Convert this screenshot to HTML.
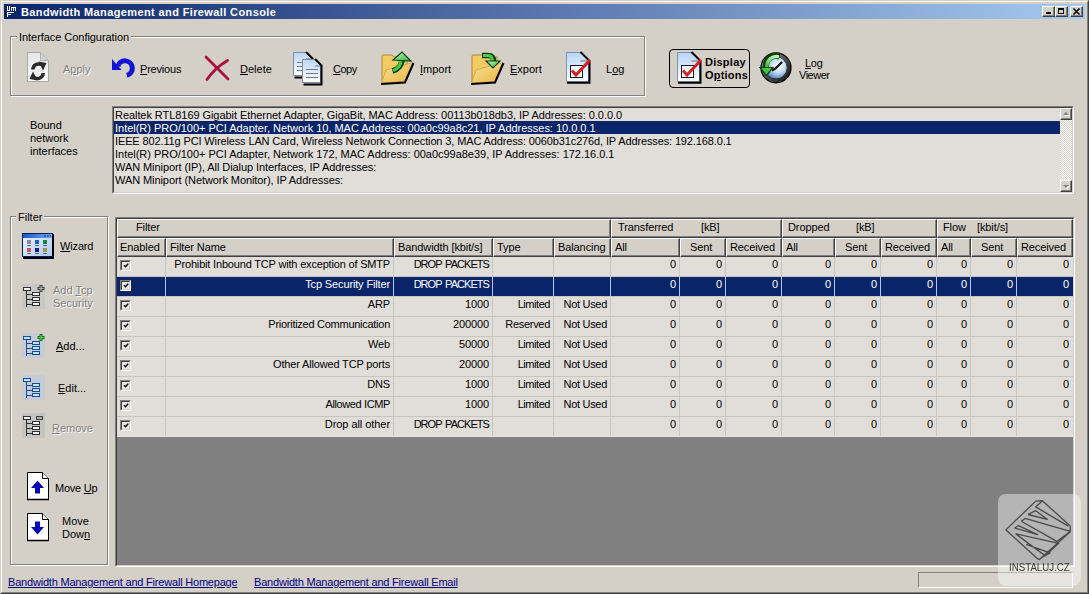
<!DOCTYPE html><html><head><meta charset="utf-8"><style>
*{margin:0;padding:0;box-sizing:border-box}
html,body{width:1089px;height:594px;overflow:hidden;background:#D4D0C8;font-family:"Liberation Sans",sans-serif;font-size:11px;color:#000}
.ab{position:absolute}
svg{position:absolute;overflow:visible}
.t{position:absolute;line-height:13px;white-space:nowrap;font-size:11px}
.u{text-decoration:underline}
.dis{color:#808080;text-shadow:1px 1px 0 #fff}
.gb{position:absolute;border:1px solid #808080;box-shadow:inset 1px 1px 0 #fff,1px 1px 0 #fff}
.gt{position:absolute;background:#D4D0C8;padding:0 2px;line-height:13px;white-space:nowrap}
.tb{position:absolute;width:13px;height:11px;background:#D4D0C8;border-top:1px solid #fff;border-left:1px solid #fff;border-right:1px solid #404040;border-bottom:1px solid #404040;box-shadow:inset -1px -1px 0 #808080}
</style></head><body>
<div class="ab" style="left:0;top:0;width:1089px;height:594px;border-top:1px solid #D4D0C8;border-left:1px solid #D4D0C8;border-right:1px solid #404040;border-bottom:1px solid #404040"></div>
<div class="ab" style="left:1px;top:1px;width:1087px;height:592px;border-top:1px solid #fff;border-left:1px solid #fff;border-right:1px solid #808080;border-bottom:1px solid #808080"></div>
<div class="ab" style="left:4px;top:4px;width:1081px;height:15px;background:linear-gradient(to right,#0A246A,#A6CAF0);"></div>
<svg style="left:0;top:0" width="20" height="20" shape-rendering="crispEdges"><g fill="#fff"><rect x="7" y="6" width="1" height="5"/><rect x="9" y="6" width="1" height="5"/><rect x="7" y="10" width="3" height="1"/><rect x="11" y="7" width="1" height="4"/><rect x="11" y="7" width="5" height="1"/><rect x="13" y="7" width="1" height="4"/><rect x="15" y="7" width="1" height="4"/><rect x="7" y="12" width="1" height="5"/><rect x="7" y="12" width="7" height="1"/><rect x="7" y="14" width="4" height="1"/></g></svg>
<div class="t " style="left:21px;top:6px;color:#fff;font-weight:bold;letter-spacing:0.38px">Bandwidth Management and Firewall Console</div>
<div class="tb" style="left:1042px;top:6px"></div>
<div class="tb" style="left:1055px;top:6px"></div>
<div class="tb" style="left:1070px;top:6px"></div>
<div class="ab" style="left:1046px;top:12px;width:5px;height:2px;background:#000;"></div>
<div class="ab" style="left:1058px;top:8px;width:6px;height:6px;border:1px solid #000;border-top-width:2px"></div>
<svg style="left:1073px;top:8px" width="7" height="7" viewBox="0 0 7 7"><path d="M0.5 0.5L6.5 6.5M6.5 0.5L0.5 6.5" stroke="#000" stroke-width="1.6"/></svg>
<div class="gb" style="left:10px;top:36px;width:635px;height:60px"></div>
<div class="gt" style="left:17px;top:31px;letter-spacing:-0.05px">Interface Configuration</div>
<svg style="left:27px;top:52px" width="22" height="30" viewBox="0 0 22 30"><defs><linearGradient id="gA" x1="0" y1="0" x2="0" y2="1"><stop offset="0" stop-color="#E6E6E6"/><stop offset="1" stop-color="#FAFAFA"/></linearGradient></defs><path d="M0.5 0.5H13.5L21.5 8.5V29.5H0.5Z" fill="url(#gA)" stroke="#A8A8A8"/><path d="M13.5 0.5V8.5H21.5" fill="#D0D0D0" stroke="#B0B0B0"/><path d="M5.8 17.5C6 13 10 11 14.5 12.5" stroke="#2A2A2A" stroke-width="3.4" fill="none"/><path d="M11.5 9.5L19.5 11L16 18.5Z" fill="#2A2A2A"/><path d="M16.2 21C16 25.5 12 27.5 7.5 26" stroke="#2A2A2A" stroke-width="3.4" fill="none"/><path d="M10.5 28.5L2.5 27L6 19.5Z" fill="#2A2A2A"/></svg>
<svg style="left:106px;top:52px" width="30" height="28" viewBox="0 0 30 28"><path d="M6 7L6 18L15.5 18Z" fill="#1414D4"/><path d="M11.8 14.3A7.4 7.4 0 1 1 20.8 23.4" stroke="#1414D4" stroke-width="5" fill="none"/></svg>
<svg style="left:198px;top:50px" width="36" height="34" viewBox="0 0 36 34"><path d="M8 7C14 13 22 21 30 29" stroke="#A8123C" stroke-width="2.8" fill="none" stroke-linecap="round"/><path d="M29.5 10.5C22 15 14 22 9 29.5" stroke="#A8123C" stroke-width="2.8" fill="none" stroke-linecap="round"/></svg>
<svg style="left:288px;top:48px" width="38" height="40" viewBox="0 0 38 40"><defs><linearGradient id="gC" x1="0" y1="0" x2="0" y2="1"><stop offset="0" stop-color="#BCD6F8"/><stop offset="1" stop-color="#FFFFFF"/></linearGradient></defs><path d="M5.5 4.5H18L23.5 10.5V27.5H5.5Z" fill="url(#gC)" stroke="#7A8AA8" stroke-width="1"/><path d="M18 4L24.5 10.5V29.5H6.5" stroke="#000" stroke-width="2" fill="none"/><path d="M9 14.5H21" stroke="#6A7A98" stroke-width="1"/><path d="M9 18.5H21" stroke="#6A7A98" stroke-width="1"/><path d="M9 22.5H21" stroke="#6A7A98" stroke-width="1"/><path d="M18 11H23" stroke="#8898B0" stroke-width="1.5"/><path d="M14.5 11.5H27L32.5 17.5V34.5H14.5Z" fill="url(#gC)" stroke="#7A8AA8" stroke-width="1"/><path d="M27 11L33.5 17.5V36.5H15.5" stroke="#000" stroke-width="2" fill="none"/><path d="M18 21.5H30" stroke="#6A7A98" stroke-width="1"/><path d="M18 25.5H30" stroke="#6A7A98" stroke-width="1"/><path d="M18 29.5H30" stroke="#6A7A98" stroke-width="1"/><path d="M27 18H32" stroke="#8898B0" stroke-width="1.5"/></svg>
<svg style="left:376px;top:48px" width="40" height="40" viewBox="0 0 40 40"><defs><linearGradient id="gF" x1="0" y1="0" x2="1" y2="1"><stop offset="0" stop-color="#FBE39A"/><stop offset="1" stop-color="#E8B440"/></linearGradient><linearGradient id="gG" x1="0" y1="0" x2="1" y2="1"><stop offset="0" stop-color="#C8F8C8"/><stop offset="1" stop-color="#30B030"/></linearGradient></defs><path d="M6 8Q6 7 7 7H16L18 9H31V16L6 35Z" fill="#F2CC62" stroke="#A07820" stroke-width="0.8"/><path d="M5.5 35L10 22L36.5 14.5L28.5 33.5Z" fill="url(#gF)" stroke="#C09030" stroke-width="0.6"/><path d="M5 36L29 34.5L37.5 15" stroke="#000" stroke-width="2" fill="none"/><path d="M16.5 23C22 21.5 26 17 26 11" stroke="#084008" stroke-width="5.5" fill="none"/><path d="M17 22.5C22 21 25 17 25 11" stroke="#48C848" stroke-width="3.2" fill="none"/><path d="M17 12L26 4L35 13Z" fill="url(#gG)" stroke="#084008" stroke-width="1.2"/></svg>
<svg style="left:466px;top:48px" width="40" height="40" viewBox="0 0 40 40"><defs><linearGradient id="gF" x1="0" y1="0" x2="1" y2="1"><stop offset="0" stop-color="#FBE39A"/><stop offset="1" stop-color="#E8B440"/></linearGradient><linearGradient id="gG" x1="0" y1="0" x2="1" y2="1"><stop offset="0" stop-color="#C8F8C8"/><stop offset="1" stop-color="#30B030"/></linearGradient></defs><path d="M6 8Q6 7 7 7H16L18 9H31V16L6 35Z" fill="#F2CC62" stroke="#A07820" stroke-width="0.8"/><path d="M5.5 35L10 22L36.5 14.5L28.5 33.5Z" fill="url(#gF)" stroke="#C09030" stroke-width="0.6"/><path d="M5 36L29 34.5L37.5 15" stroke="#000" stroke-width="2" fill="none"/><path d="M16 7.5H22C26 7.5 27.5 9.5 27.5 13.5" stroke="#084008" stroke-width="5.5" fill="none"/><path d="M17 7.5H22C25 7.5 26.5 9.5 26.5 13.5" stroke="#50C850" stroke-width="2.8" fill="none"/><path d="M20 13H34L27 20Z" fill="url(#gG)" stroke="#084008" stroke-width="1.2"/></svg>
<svg style="left:566px;top:52px" width="28" height="36" viewBox="0 0 28 36"><defs><linearGradient id="gL1" x1="0" y1="0" x2="0" y2="1"><stop offset="0" stop-color="#B8D4F8"/><stop offset="1" stop-color="#FFFFFF"/></linearGradient></defs><path d="M0.5 0.5H14.5L22.5 8.5V29.5H0.5Z" fill="url(#gL1)" stroke="#8090B0"/><path d="M14.5 0L23.5 9V30.8H1" stroke="#000" stroke-width="2" fill="none"/><path d="M14.5 9H22" stroke="#8898A8" stroke-width="1.5"/><rect x="4.5" y="13.5" width="12" height="12" fill="#fff" stroke="#101840" stroke-width="1"/><path d="M6 18.5L10 23L24 8" stroke="#D42020" stroke-width="3" fill="none"/></svg>
<div class="t " style="left:606px;top:63px;">L<span class="u">o</span>g</div>
<div class="ab" style="left:669px;top:49px;width:81px;height:39px;border:1px solid #000;border-radius:4px"></div>
<svg style="left:677px;top:52px" width="28" height="36" viewBox="0 0 28 36"><defs><linearGradient id="gL2" x1="0" y1="0" x2="0" y2="1"><stop offset="0" stop-color="#B8D4F8"/><stop offset="1" stop-color="#FFFFFF"/></linearGradient></defs><path d="M0.5 0.5H14.5L22.5 8.5V29.5H0.5Z" fill="url(#gL2)" stroke="#8090B0"/><path d="M14.5 0L23.5 9V30.8H1" stroke="#000" stroke-width="2" fill="none"/><path d="M14.5 9H22" stroke="#8898A8" stroke-width="1.5"/><rect x="4.5" y="13.5" width="12" height="12" fill="#fff" stroke="#101840" stroke-width="1"/><path d="M6 18.5L10 23L24 8" stroke="#D42020" stroke-width="3" fill="none"/></svg>
<svg style="left:760px;top:52px" width="33" height="33" viewBox="0 0 33 33"><defs><radialGradient id="gK" cx="0.6" cy="0.4" r="0.6"><stop offset="0" stop-color="#FFFFFF"/><stop offset="0.5" stop-color="#C8E0F4"/><stop offset="1" stop-color="#5A8AC0"/></radialGradient><linearGradient id="gR" x1="0" y1="0" x2="1" y2="1"><stop offset="0" stop-color="#A0A0A0"/><stop offset="0.5" stop-color="#505050"/><stop offset="1" stop-color="#101010"/></linearGradient><linearGradient id="gA2" x1="0" y1="0" x2="0" y2="1"><stop offset="0" stop-color="#B8F0B0"/><stop offset="1" stop-color="#30B830"/></linearGradient></defs><circle cx="16" cy="15.8" r="15" fill="url(#gR)" stroke="#000" stroke-width="1.2"/><circle cx="16" cy="15.8" r="11.2" fill="url(#gK)" stroke="#303030" stroke-width="1"/><path d="M15.5 16.5L22 10M15.5 16.5L12 18.5" stroke="#101010" stroke-width="2.2"/><path d="M19.5 4.5C12 2.5 5.5 7 5.8 15.5" stroke="#0A400A" stroke-width="6" fill="none"/><path d="M19 4.8C12.5 3.5 6.8 7.5 6.8 15.5" stroke="url(#gA2)" stroke-width="3.4" fill="none"/><path d="M0 15.5H13L6.5 23.5Z" fill="#40C840" stroke="#0A400A" stroke-width="1.2"/></svg>
<div class="t dis" style="left:63px;top:63px;">A<span class="u">p</span>ply</div>
<div class="t " style="left:140px;top:63px;letter-spacing:-0.2px"><span class="u">P</span>revious</div>
<div class="t " style="left:240px;top:63px;"><span class="u">D</span>elete</div>
<div class="t " style="left:333px;top:63px;letter-spacing:-0.5px"><span class="u">C</span>opy</div>
<div class="t " style="left:420px;top:63px;"><span class="u">I</span>mport</div>
<div class="t " style="left:510px;top:63px;"><span class="u">E</span>xport</div>
<div class="t " style="left:705px;top:56px;font-weight:bold;letter-spacing:0.25px">Display</div>
<div class="t " style="left:705px;top:69px;font-weight:bold;letter-spacing:0.2px">O<span class="u">p</span>tions</div>
<div class="t " style="left:805px;top:57px;letter-spacing:-0.3px"><span class="u">L</span>og</div>
<div class="t " style="left:799px;top:69px;letter-spacing:-0.5px">Viewer</div>
<div class="t " style="left:30px;top:119px;">Bound</div>
<div class="t " style="left:30px;top:132px;">network</div>
<div class="t " style="left:30px;top:145px;">interfaces</div>
<div class="ab" style="left:112px;top:106px;width:962px;height:88px;border-top:1px solid #808080;border-left:1px solid #808080;border-right:1px solid #fff;border-bottom:1px solid #fff"></div>
<div class="ab" style="left:113px;top:107px;width:960px;height:86px;border-top:1px solid #404040;border-left:1px solid #404040;border-right:1px solid #D4D0C8;border-bottom:1px solid #D4D0C8;background:#E1DEDA;"></div>
<div class="t " style="left:115px;top:109px;color:#000;letter-spacing:-0.061px">Realtek RTL8169 Gigabit Ethernet Adapter, GigaBit, MAC Address: 00113b018db3, IP Addresses: 0.0.0.0</div>
<div class="ab" style="left:114px;top:121px;width:946px;height:13px;background:#0A246A;"></div>
<div class="t " style="left:115px;top:122px;color:#fff;letter-spacing:-0.022px">Intel(R) PRO/100+ PCI Adapter, Network 10, MAC Address: 00a0c99a8c21, IP Addresses: 10.0.0.1</div>
<div class="t " style="left:115px;top:135px;color:#000;letter-spacing:-0.128px">IEEE 802.11g PCI Wireless LAN Card, Wireless Network Connection 3, MAC Address: 0060b31c276d, IP Addresses: 192.168.0.1</div>
<div class="t " style="left:115px;top:148px;color:#000;letter-spacing:-0.022px">Intel(R) PRO/100+ PCI Adapter, Network 172, MAC Address: 00a0c99a8e39, IP Addresses: 172.16.0.1</div>
<div class="t " style="left:115px;top:161px;color:#000;letter-spacing:-0.075px">WAN Miniport (IP), All Dialup Interfaces, IP Addresses:</div>
<div class="t " style="left:115px;top:174px;color:#000;letter-spacing:-0.08px">WAN Miniport (Network Monitor), IP Addresses:</div>
<div class="ab" style="left:1060px;top:108px;width:12px;height:84px;background:repeating-conic-gradient(#fff 0 25%,#D4D0C8 0 50%) 0 0/2px 2px"></div>
<div class="tb" style="left:1060px;top:108px;width:12px;height:12px"></div>
<div class="tb" style="left:1060px;top:180px;width:12px;height:12px"></div>
<svg style="left:1063px;top:112px" width="8" height="5" viewBox="0 0 8 5"><path d="M4 1L7 4H1Z" fill="#fff"/><path d="M3 0L6 3H0Z" fill="#808080"/></svg>
<svg style="left:1063px;top:185px" width="8" height="5" viewBox="0 0 8 5"><path d="M1 1H7L4 4Z" fill="#fff"/><path d="M0 0H6L3 3Z" fill="#808080"/></svg>
<div class="gb" style="left:10px;top:216px;width:98px;height:349px"></div>
<div class="gt" style="left:16px;top:211px">Filter</div>
<svg style="left:22px;top:233px" width="32" height="26" viewBox="0 0 32 26"><defs><linearGradient id="gW" x1="0" y1="0" x2="1" y2="0"><stop offset="0" stop-color="#1A5AC8"/><stop offset="1" stop-color="#70A8F0"/></linearGradient><linearGradient id="gW2" x1="0" y1="0" x2="1" y2="1"><stop offset="0" stop-color="#F0F6FF"/><stop offset="1" stop-color="#A8C8F0"/></linearGradient></defs><rect x="0.5" y="0.5" width="30" height="23" fill="url(#gW2)" stroke="#0A1A50"/><rect x="1" y="1" width="29" height="4" fill="url(#gW)"/><path d="M22 3H29" stroke="#3060B0" stroke-width="2" stroke-dasharray="2 1"/><path d="M31 1V25H1" stroke="#000010" stroke-width="2" fill="none"/><rect x="5" y="7" width="4" height="4" fill="#8A88A8"/><rect x="13" y="7" width="4" height="4" fill="#2060C0"/><rect x="21" y="7" width="4" height="4" fill="#208040"/><rect x="5" y="15" width="4" height="4" fill="#C05858"/><rect x="13" y="15" width="4" height="4" fill="#102080"/><rect x="21" y="15" width="4" height="4" fill="#A89050"/><path d="M5 12.5h4M13 12.5h4M21 12.5h4M5 20.5h4M13 20.5h4M21 20.5h4" stroke="#606080" stroke-width="1"/></svg>
<svg style="left:22px;top:284px" width="24" height="26" viewBox="0 0 24 26"><rect x="0" y="0" width="23" height="25" fill="#C8C8C6"/><path d="M4.5 6V23M4.5 10.5H10M4.5 15.5H10M4.5 20.5H10" stroke="#303030" stroke-width="1"/><rect x="1.5" y="3.5" width="7" height="3" fill="#F4F4F4" stroke="#303030"/><rect x="10.5" y="8.5" width="7" height="3" fill="#F4F4F4" stroke="#303030"/><rect x="10.5" y="13.5" width="7" height="3" fill="#F4F4F4" stroke="#303030"/><rect x="10.5" y="18.5" width="7" height="3" fill="#F4F4F4" stroke="#303030"/><path d="M19 1V8M15.5 4.5H22.5" stroke="#404040" stroke-width="3"/><path d="M19 2V7M16.5 4.5H21.5" stroke="#B0B0B0" stroke-width="1.2"/></svg>
<svg style="left:22px;top:333px" width="24" height="26" viewBox="0 0 24 26"><rect x="0" y="0" width="23" height="25" fill="#C6CCD6"/><path d="M4.5 6V23M4.5 10.5H10M4.5 15.5H10M4.5 20.5H10" stroke="#1A4A90" stroke-width="1"/><rect x="1.5" y="3.5" width="7" height="3" fill="#B8E4FF" stroke="#1A4A90"/><rect x="10.5" y="8.5" width="7" height="3" fill="#B8E4FF" stroke="#1A4A90"/><rect x="10.5" y="13.5" width="7" height="3" fill="#B8E4FF" stroke="#1A4A90"/><rect x="10.5" y="18.5" width="7" height="3" fill="#B8E4FF" stroke="#1A4A90"/><path d="M19 1V8M15.5 4.5H22.5" stroke="#207020" stroke-width="3"/><path d="M19 2V7M16.5 4.5H21.5" stroke="#60D040" stroke-width="1.2"/></svg>
<svg style="left:22px;top:375px" width="24" height="26" viewBox="0 0 24 26"><rect x="0" y="0" width="23" height="25" fill="#C6CCD6"/><path d="M4.5 6V23M4.5 10.5H10M4.5 15.5H10M4.5 20.5H10" stroke="#1A4A90" stroke-width="1"/><rect x="1.5" y="3.5" width="7" height="3" fill="#B8E4FF" stroke="#1A4A90"/><rect x="10.5" y="8.5" width="7" height="3" fill="#B8E4FF" stroke="#1A4A90"/><rect x="10.5" y="13.5" width="7" height="3" fill="#B8E4FF" stroke="#1A4A90"/><rect x="10.5" y="18.5" width="7" height="3" fill="#B8E4FF" stroke="#1A4A90"/></svg>
<svg style="left:22px;top:413px" width="24" height="26" viewBox="0 0 24 26"><rect x="0" y="0" width="23" height="25" fill="#C4C4C2"/><path d="M4.5 6V23M4.5 10.5H10M4.5 15.5H10M4.5 20.5H10" stroke="#303030" stroke-width="1"/><rect x="1.5" y="3.5" width="7" height="3" fill="#F4F4F4" stroke="#303030"/><rect x="10.5" y="8.5" width="7" height="3" fill="#F4F4F4" stroke="#303030"/><rect x="10.5" y="13.5" width="7" height="3" fill="#F4F4F4" stroke="#303030"/><rect x="10.5" y="18.5" width="7" height="3" fill="#F4F4F4" stroke="#303030"/><rect x="14.5" y="3.5" width="6" height="3" fill="#B0B0B0" stroke="#404040"/></svg>
<svg style="left:27px;top:472px" width="22" height="28" viewBox="0 0 22 28"><path d="M0.5 0.5H15.5L21.5 6.5V27.5H0.5Z" fill="#FFFFFF" stroke="#000"/><path d="M15.5 0.5V6.5H21.5" fill="#F4F4F4" stroke="#000"/><path d="M0 27.5H22" stroke="#000" stroke-width="1.5"/><path d="M10.5 8.5L4 16H8V21.5H13V16H17Z" fill="#0606B4"/></svg>
<svg style="left:27px;top:513px" width="22" height="28" viewBox="0 0 22 28"><path d="M0.5 0.5H15.5L21.5 6.5V27.5H0.5Z" fill="#FFFFFF" stroke="#000"/><path d="M15.5 0.5V6.5H21.5" fill="#F4F4F4" stroke="#000"/><path d="M0 27.5H22" stroke="#000" stroke-width="1.5"/><path d="M8 8.5H13V14H17L10.5 21.5L4 14H8Z" fill="#0606B4"/></svg>
<div class="t " style="left:60px;top:240px;letter-spacing:-0.15px"><span class="u">W</span>izard</div>
<div class="t dis" style="left:53px;top:284px;">Add <span class="u">T</span>cp</div>
<div class="t dis" style="left:53px;top:297px;">Security</div>
<div class="t " style="left:56px;top:340px;"><span class="u">A</span>dd...</div>
<div class="t " style="left:58px;top:382px;"><span class="u">E</span>dit...</div>
<div class="t dis" style="left:52px;top:422px;"><span class="u">R</span>emove</div>
<div class="t " style="left:55px;top:482px;letter-spacing:-0.25px">Move <span class="u">U</span>p</div>
<div class="t " style="left:62px;top:515px;">Move</div>
<div class="t " style="left:62px;top:528px;">Dow<span class="u">n</span></div>
<div class="ab" style="left:115px;top:217px;width:960px;height:350px;border-top:1px solid #808080;border-left:1px solid #808080;border-right:1px solid #fff;border-bottom:1px solid #fff"></div>
<div class="ab" style="left:116px;top:218px;width:958px;height:348px;border-top:1px solid #404040;border-left:1px solid #404040;border-right:1px solid #D4D0C8;border-bottom:1px solid #D4D0C8;background:#808080;"></div>
<div class="ab" style="left:117px;top:219px;width:494px;height:19px;background:#D4D0C8;border-top:1px solid #fff;border-left:1px solid #fff;border-right:1px solid #404040;border-bottom:1px solid #404040;box-shadow:inset -1px -1px 0 #808080"></div>
<div class="t " style="left:136px;top:221px;letter-spacing:-0.1px">Filter</div>
<div class="ab" style="left:611px;top:219px;width:171px;height:19px;background:#D4D0C8;border-top:1px solid #fff;border-left:1px solid #fff;border-right:1px solid #404040;border-bottom:1px solid #404040;box-shadow:inset -1px -1px 0 #808080"></div>
<div class="t " style="left:618px;top:221px;letter-spacing:-0.1px">Transferred</div>
<div class="t " style="left:701px;top:221px;letter-spacing:-0.1px">[kB]</div>
<div class="ab" style="left:782px;top:219px;width:155px;height:19px;background:#D4D0C8;border-top:1px solid #fff;border-left:1px solid #fff;border-right:1px solid #404040;border-bottom:1px solid #404040;box-shadow:inset -1px -1px 0 #808080"></div>
<div class="t " style="left:788px;top:221px;letter-spacing:-0.1px">Dropped</div>
<div class="t " style="left:856px;top:221px;letter-spacing:-0.1px">[kB]</div>
<div class="ab" style="left:937px;top:219px;width:136px;height:19px;background:#D4D0C8;border-top:1px solid #fff;border-left:1px solid #fff;border-right:1px solid #404040;border-bottom:1px solid #404040;box-shadow:inset -1px -1px 0 #808080"></div>
<div class="t " style="left:943px;top:221px;letter-spacing:-0.1px">Flow</div>
<div class="t " style="left:977px;top:221px;letter-spacing:-0.1px">[kbit/s]</div>
<div class="ab" style="left:117px;top:238px;width:49px;height:19px;background:#D4D0C8;border-top:1px solid #fff;border-left:1px solid #fff;border-right:1px solid #404040;border-bottom:1px solid #404040;box-shadow:inset -1px -1px 0 #808080"></div>
<div class="t " style="left:120px;top:241px;letter-spacing:-0.1px">Enabled</div>
<div class="ab" style="left:166px;top:238px;width:228px;height:19px;background:#D4D0C8;border-top:1px solid #fff;border-left:1px solid #fff;border-right:1px solid #404040;border-bottom:1px solid #404040;box-shadow:inset -1px -1px 0 #808080"></div>
<div class="t " style="left:170px;top:241px;letter-spacing:-0.1px">Filter Name</div>
<div class="ab" style="left:394px;top:238px;width:99px;height:19px;background:#D4D0C8;border-top:1px solid #fff;border-left:1px solid #fff;border-right:1px solid #404040;border-bottom:1px solid #404040;box-shadow:inset -1px -1px 0 #808080"></div>
<div class="t " style="left:398px;top:241px;letter-spacing:-0.1px">Bandwidth [kbit/s]</div>
<div class="ab" style="left:493px;top:238px;width:61px;height:19px;background:#D4D0C8;border-top:1px solid #fff;border-left:1px solid #fff;border-right:1px solid #404040;border-bottom:1px solid #404040;box-shadow:inset -1px -1px 0 #808080"></div>
<div class="t " style="left:497px;top:241px;letter-spacing:-0.1px">Type</div>
<div class="ab" style="left:554px;top:238px;width:57px;height:19px;background:#D4D0C8;border-top:1px solid #fff;border-left:1px solid #fff;border-right:1px solid #404040;border-bottom:1px solid #404040;box-shadow:inset -1px -1px 0 #808080"></div>
<div class="t " style="left:558px;top:241px;letter-spacing:-0.1px">Balancing</div>
<div class="ab" style="left:611px;top:238px;width:69px;height:19px;background:#D4D0C8;border-top:1px solid #fff;border-left:1px solid #fff;border-right:1px solid #404040;border-bottom:1px solid #404040;box-shadow:inset -1px -1px 0 #808080"></div>
<div class="t " style="left:615px;top:241px;letter-spacing:-0.1px">All</div>
<div class="ab" style="left:680px;top:238px;width:46px;height:19px;background:#D4D0C8;border-top:1px solid #fff;border-left:1px solid #fff;border-right:1px solid #404040;border-bottom:1px solid #404040;box-shadow:inset -1px -1px 0 #808080"></div>
<div class="t " style="left:690px;top:241px;letter-spacing:-0.1px">Sent</div>
<div class="ab" style="left:726px;top:238px;width:56px;height:19px;background:#D4D0C8;border-top:1px solid #fff;border-left:1px solid #fff;border-right:1px solid #404040;border-bottom:1px solid #404040;box-shadow:inset -1px -1px 0 #808080"></div>
<div class="t " style="left:730px;top:241px;letter-spacing:-0.1px">Received</div>
<div class="ab" style="left:782px;top:238px;width:53px;height:19px;background:#D4D0C8;border-top:1px solid #fff;border-left:1px solid #fff;border-right:1px solid #404040;border-bottom:1px solid #404040;box-shadow:inset -1px -1px 0 #808080"></div>
<div class="t " style="left:786px;top:241px;letter-spacing:-0.1px">All</div>
<div class="ab" style="left:835px;top:238px;width:46px;height:19px;background:#D4D0C8;border-top:1px solid #fff;border-left:1px solid #fff;border-right:1px solid #404040;border-bottom:1px solid #404040;box-shadow:inset -1px -1px 0 #808080"></div>
<div class="t " style="left:845px;top:241px;letter-spacing:-0.1px">Sent</div>
<div class="ab" style="left:881px;top:238px;width:56px;height:19px;background:#D4D0C8;border-top:1px solid #fff;border-left:1px solid #fff;border-right:1px solid #404040;border-bottom:1px solid #404040;box-shadow:inset -1px -1px 0 #808080"></div>
<div class="t " style="left:885px;top:241px;letter-spacing:-0.1px">Received</div>
<div class="ab" style="left:937px;top:238px;width:34px;height:19px;background:#D4D0C8;border-top:1px solid #fff;border-left:1px solid #fff;border-right:1px solid #404040;border-bottom:1px solid #404040;box-shadow:inset -1px -1px 0 #808080"></div>
<div class="t " style="left:941px;top:241px;letter-spacing:-0.1px">All</div>
<div class="ab" style="left:971px;top:238px;width:46px;height:19px;background:#D4D0C8;border-top:1px solid #fff;border-left:1px solid #fff;border-right:1px solid #404040;border-bottom:1px solid #404040;box-shadow:inset -1px -1px 0 #808080"></div>
<div class="t " style="left:981px;top:241px;letter-spacing:-0.1px">Sent</div>
<div class="ab" style="left:1017px;top:238px;width:56px;height:19px;background:#D4D0C8;border-top:1px solid #fff;border-left:1px solid #fff;border-right:1px solid #404040;border-bottom:1px solid #404040;box-shadow:inset -1px -1px 0 #808080"></div>
<div class="t " style="left:1021px;top:241px;letter-spacing:-0.1px">Received</div>
<div class="ab" style="left:117px;top:257px;width:956px;height:19px;background:#E1DEDA;"></div>
<div class="ab" style="left:117px;top:276px;width:956px;height:1px;background:#C8C5C0;"></div>
<div class="ab" style="left:165px;top:257px;width:1px;height:19px;background:#C8C5C0;"></div>
<div class="ab" style="left:393px;top:257px;width:1px;height:19px;background:#C8C5C0;"></div>
<div class="ab" style="left:492px;top:257px;width:1px;height:19px;background:#C8C5C0;"></div>
<div class="ab" style="left:553px;top:257px;width:1px;height:19px;background:#C8C5C0;"></div>
<div class="ab" style="left:610px;top:257px;width:1px;height:19px;background:#C8C5C0;"></div>
<div class="ab" style="left:679px;top:257px;width:1px;height:19px;background:#C8C5C0;"></div>
<div class="ab" style="left:725px;top:257px;width:1px;height:19px;background:#C8C5C0;"></div>
<div class="ab" style="left:781px;top:257px;width:1px;height:19px;background:#C8C5C0;"></div>
<div class="ab" style="left:834px;top:257px;width:1px;height:19px;background:#C8C5C0;"></div>
<div class="ab" style="left:880px;top:257px;width:1px;height:19px;background:#C8C5C0;"></div>
<div class="ab" style="left:936px;top:257px;width:1px;height:19px;background:#C8C5C0;"></div>
<div class="ab" style="left:970px;top:257px;width:1px;height:19px;background:#C8C5C0;"></div>
<div class="ab" style="left:1016px;top:257px;width:1px;height:19px;background:#C8C5C0;"></div>
<div class="t" style="right:699px;top:258px;color:#000;letter-spacing:-0.18px;">Prohibit Inbound TCP with exception of SMTP</div>
<div class="t" style="right:600px;top:258px;color:#000;letter-spacing:-0.95px;word-spacing:1.6px">DROP PACKETS</div>
<div class="t" style="right:413px;top:258px;color:#000;letter-spacing:-0.12px;">0</div>
<div class="t" style="right:367px;top:258px;color:#000;letter-spacing:-0.12px;">0</div>
<div class="t" style="right:311px;top:258px;color:#000;letter-spacing:-0.12px;">0</div>
<div class="t" style="right:258px;top:258px;color:#000;letter-spacing:-0.12px;">0</div>
<div class="t" style="right:212px;top:258px;color:#000;letter-spacing:-0.12px;">0</div>
<div class="t" style="right:156px;top:258px;color:#000;letter-spacing:-0.12px;">0</div>
<div class="t" style="right:122px;top:258px;color:#000;letter-spacing:-0.12px;">0</div>
<div class="t" style="right:76px;top:258px;color:#000;letter-spacing:-0.12px;">0</div>
<div class="t" style="right:20px;top:258px;color:#000;letter-spacing:-0.12px;">0</div>
<div class="ab" style="left:120px;top:260px;width:11px;height:11px;border-top:1px solid #808080;border-left:1px solid #808080;border-right:1px solid #fff;border-bottom:1px solid #fff"></div>
<div class="ab" style="left:121px;top:261px;width:9px;height:9px;border-top:1px solid #404040;border-left:1px solid #404040;border-right:1px solid #D4D0C8;border-bottom:1px solid #D4D0C8;background:#E8E6E2"></div>
<svg style="left:122px;top:262px" width="7" height="7" viewBox="0 0 7 7"><path d="M2 3.2L3.6 4.8L6.2 1.6" stroke="#000" stroke-width="1.4" fill="none"/></svg>
<div class="ab" style="left:117px;top:277px;width:956px;height:19px;background:#0A246A;"></div>
<div class="ab" style="left:117px;top:296px;width:956px;height:1px;background:#C8C5C0;"></div>
<div class="ab" style="left:165px;top:277px;width:1px;height:19px;background:#A6CAF0;"></div>
<div class="ab" style="left:393px;top:277px;width:1px;height:19px;background:#A6CAF0;"></div>
<div class="ab" style="left:492px;top:277px;width:1px;height:19px;background:#A6CAF0;"></div>
<div class="ab" style="left:553px;top:277px;width:1px;height:19px;background:#A6CAF0;"></div>
<div class="ab" style="left:610px;top:277px;width:1px;height:19px;background:#A6CAF0;"></div>
<div class="ab" style="left:679px;top:277px;width:1px;height:19px;background:#A6CAF0;"></div>
<div class="ab" style="left:725px;top:277px;width:1px;height:19px;background:#A6CAF0;"></div>
<div class="ab" style="left:781px;top:277px;width:1px;height:19px;background:#A6CAF0;"></div>
<div class="ab" style="left:834px;top:277px;width:1px;height:19px;background:#A6CAF0;"></div>
<div class="ab" style="left:880px;top:277px;width:1px;height:19px;background:#A6CAF0;"></div>
<div class="ab" style="left:936px;top:277px;width:1px;height:19px;background:#A6CAF0;"></div>
<div class="ab" style="left:970px;top:277px;width:1px;height:19px;background:#A6CAF0;"></div>
<div class="ab" style="left:1016px;top:277px;width:1px;height:19px;background:#A6CAF0;"></div>
<div class="t" style="right:699px;top:278px;color:#fff;letter-spacing:-0.14px;">Tcp Security Filter</div>
<div class="t" style="right:600px;top:278px;color:#fff;letter-spacing:-0.95px;word-spacing:1.6px">DROP PACKETS</div>
<div class="t" style="right:413px;top:278px;color:#fff;letter-spacing:-0.12px;">0</div>
<div class="t" style="right:367px;top:278px;color:#fff;letter-spacing:-0.12px;">0</div>
<div class="t" style="right:311px;top:278px;color:#fff;letter-spacing:-0.12px;">0</div>
<div class="t" style="right:258px;top:278px;color:#fff;letter-spacing:-0.12px;">0</div>
<div class="t" style="right:212px;top:278px;color:#fff;letter-spacing:-0.12px;">0</div>
<div class="t" style="right:156px;top:278px;color:#fff;letter-spacing:-0.12px;">0</div>
<div class="t" style="right:122px;top:278px;color:#fff;letter-spacing:-0.12px;">0</div>
<div class="t" style="right:76px;top:278px;color:#fff;letter-spacing:-0.12px;">0</div>
<div class="t" style="right:20px;top:278px;color:#fff;letter-spacing:-0.12px;">0</div>
<div class="ab" style="left:120px;top:280px;width:11px;height:11px;border-top:1px solid #808080;border-left:1px solid #808080;border-right:1px solid #fff;border-bottom:1px solid #fff"></div>
<div class="ab" style="left:121px;top:281px;width:9px;height:9px;border-top:1px solid #404040;border-left:1px solid #404040;border-right:1px solid #D4D0C8;border-bottom:1px solid #D4D0C8;background:#E8E6E2"></div>
<svg style="left:122px;top:282px" width="7" height="7" viewBox="0 0 7 7"><path d="M2 3.2L3.6 4.8L6.2 1.6" stroke="#000" stroke-width="1.4" fill="none"/></svg>
<div class="ab" style="left:117px;top:297px;width:956px;height:19px;background:#E1DEDA;"></div>
<div class="ab" style="left:117px;top:316px;width:956px;height:1px;background:#C8C5C0;"></div>
<div class="ab" style="left:165px;top:297px;width:1px;height:19px;background:#C8C5C0;"></div>
<div class="ab" style="left:393px;top:297px;width:1px;height:19px;background:#C8C5C0;"></div>
<div class="ab" style="left:492px;top:297px;width:1px;height:19px;background:#C8C5C0;"></div>
<div class="ab" style="left:553px;top:297px;width:1px;height:19px;background:#C8C5C0;"></div>
<div class="ab" style="left:610px;top:297px;width:1px;height:19px;background:#C8C5C0;"></div>
<div class="ab" style="left:679px;top:297px;width:1px;height:19px;background:#C8C5C0;"></div>
<div class="ab" style="left:725px;top:297px;width:1px;height:19px;background:#C8C5C0;"></div>
<div class="ab" style="left:781px;top:297px;width:1px;height:19px;background:#C8C5C0;"></div>
<div class="ab" style="left:834px;top:297px;width:1px;height:19px;background:#C8C5C0;"></div>
<div class="ab" style="left:880px;top:297px;width:1px;height:19px;background:#C8C5C0;"></div>
<div class="ab" style="left:936px;top:297px;width:1px;height:19px;background:#C8C5C0;"></div>
<div class="ab" style="left:970px;top:297px;width:1px;height:19px;background:#C8C5C0;"></div>
<div class="ab" style="left:1016px;top:297px;width:1px;height:19px;background:#C8C5C0;"></div>
<div class="t" style="right:699px;top:298px;color:#000;letter-spacing:-0.12px;">ARP</div>
<div class="t" style="right:600px;top:298px;color:#000;letter-spacing:-0.12px;">1000</div>
<div class="t" style="right:539px;top:298px;color:#000;letter-spacing:-0.45px;">Limited</div>
<div class="t" style="right:482px;top:298px;color:#000;letter-spacing:-0.3px;">Not Used</div>
<div class="t" style="right:413px;top:298px;color:#000;letter-spacing:-0.12px;">0</div>
<div class="t" style="right:367px;top:298px;color:#000;letter-spacing:-0.12px;">0</div>
<div class="t" style="right:311px;top:298px;color:#000;letter-spacing:-0.12px;">0</div>
<div class="t" style="right:258px;top:298px;color:#000;letter-spacing:-0.12px;">0</div>
<div class="t" style="right:212px;top:298px;color:#000;letter-spacing:-0.12px;">0</div>
<div class="t" style="right:156px;top:298px;color:#000;letter-spacing:-0.12px;">0</div>
<div class="t" style="right:122px;top:298px;color:#000;letter-spacing:-0.12px;">0</div>
<div class="t" style="right:76px;top:298px;color:#000;letter-spacing:-0.12px;">0</div>
<div class="t" style="right:20px;top:298px;color:#000;letter-spacing:-0.12px;">0</div>
<div class="ab" style="left:120px;top:300px;width:11px;height:11px;border-top:1px solid #808080;border-left:1px solid #808080;border-right:1px solid #fff;border-bottom:1px solid #fff"></div>
<div class="ab" style="left:121px;top:301px;width:9px;height:9px;border-top:1px solid #404040;border-left:1px solid #404040;border-right:1px solid #D4D0C8;border-bottom:1px solid #D4D0C8;background:#E8E6E2"></div>
<svg style="left:122px;top:302px" width="7" height="7" viewBox="0 0 7 7"><path d="M2 3.2L3.6 4.8L6.2 1.6" stroke="#000" stroke-width="1.4" fill="none"/></svg>
<div class="ab" style="left:117px;top:317px;width:956px;height:19px;background:#E1DEDA;"></div>
<div class="ab" style="left:117px;top:336px;width:956px;height:1px;background:#C8C5C0;"></div>
<div class="ab" style="left:165px;top:317px;width:1px;height:19px;background:#C8C5C0;"></div>
<div class="ab" style="left:393px;top:317px;width:1px;height:19px;background:#C8C5C0;"></div>
<div class="ab" style="left:492px;top:317px;width:1px;height:19px;background:#C8C5C0;"></div>
<div class="ab" style="left:553px;top:317px;width:1px;height:19px;background:#C8C5C0;"></div>
<div class="ab" style="left:610px;top:317px;width:1px;height:19px;background:#C8C5C0;"></div>
<div class="ab" style="left:679px;top:317px;width:1px;height:19px;background:#C8C5C0;"></div>
<div class="ab" style="left:725px;top:317px;width:1px;height:19px;background:#C8C5C0;"></div>
<div class="ab" style="left:781px;top:317px;width:1px;height:19px;background:#C8C5C0;"></div>
<div class="ab" style="left:834px;top:317px;width:1px;height:19px;background:#C8C5C0;"></div>
<div class="ab" style="left:880px;top:317px;width:1px;height:19px;background:#C8C5C0;"></div>
<div class="ab" style="left:936px;top:317px;width:1px;height:19px;background:#C8C5C0;"></div>
<div class="ab" style="left:970px;top:317px;width:1px;height:19px;background:#C8C5C0;"></div>
<div class="ab" style="left:1016px;top:317px;width:1px;height:19px;background:#C8C5C0;"></div>
<div class="t" style="right:699px;top:318px;color:#000;letter-spacing:-0.27px;">Prioritized Communication</div>
<div class="t" style="right:600px;top:318px;color:#000;letter-spacing:-0.12px;">200000</div>
<div class="t" style="right:539px;top:318px;color:#000;letter-spacing:-0.3px;">Reserved</div>
<div class="t" style="right:482px;top:318px;color:#000;letter-spacing:-0.3px;">Not Used</div>
<div class="t" style="right:413px;top:318px;color:#000;letter-spacing:-0.12px;">0</div>
<div class="t" style="right:367px;top:318px;color:#000;letter-spacing:-0.12px;">0</div>
<div class="t" style="right:311px;top:318px;color:#000;letter-spacing:-0.12px;">0</div>
<div class="t" style="right:258px;top:318px;color:#000;letter-spacing:-0.12px;">0</div>
<div class="t" style="right:212px;top:318px;color:#000;letter-spacing:-0.12px;">0</div>
<div class="t" style="right:156px;top:318px;color:#000;letter-spacing:-0.12px;">0</div>
<div class="t" style="right:122px;top:318px;color:#000;letter-spacing:-0.12px;">0</div>
<div class="t" style="right:76px;top:318px;color:#000;letter-spacing:-0.12px;">0</div>
<div class="t" style="right:20px;top:318px;color:#000;letter-spacing:-0.12px;">0</div>
<div class="ab" style="left:120px;top:320px;width:11px;height:11px;border-top:1px solid #808080;border-left:1px solid #808080;border-right:1px solid #fff;border-bottom:1px solid #fff"></div>
<div class="ab" style="left:121px;top:321px;width:9px;height:9px;border-top:1px solid #404040;border-left:1px solid #404040;border-right:1px solid #D4D0C8;border-bottom:1px solid #D4D0C8;background:#E8E6E2"></div>
<svg style="left:122px;top:322px" width="7" height="7" viewBox="0 0 7 7"><path d="M2 3.2L3.6 4.8L6.2 1.6" stroke="#000" stroke-width="1.4" fill="none"/></svg>
<div class="ab" style="left:117px;top:337px;width:956px;height:19px;background:#E1DEDA;"></div>
<div class="ab" style="left:117px;top:356px;width:956px;height:1px;background:#C8C5C0;"></div>
<div class="ab" style="left:165px;top:337px;width:1px;height:19px;background:#C8C5C0;"></div>
<div class="ab" style="left:393px;top:337px;width:1px;height:19px;background:#C8C5C0;"></div>
<div class="ab" style="left:492px;top:337px;width:1px;height:19px;background:#C8C5C0;"></div>
<div class="ab" style="left:553px;top:337px;width:1px;height:19px;background:#C8C5C0;"></div>
<div class="ab" style="left:610px;top:337px;width:1px;height:19px;background:#C8C5C0;"></div>
<div class="ab" style="left:679px;top:337px;width:1px;height:19px;background:#C8C5C0;"></div>
<div class="ab" style="left:725px;top:337px;width:1px;height:19px;background:#C8C5C0;"></div>
<div class="ab" style="left:781px;top:337px;width:1px;height:19px;background:#C8C5C0;"></div>
<div class="ab" style="left:834px;top:337px;width:1px;height:19px;background:#C8C5C0;"></div>
<div class="ab" style="left:880px;top:337px;width:1px;height:19px;background:#C8C5C0;"></div>
<div class="ab" style="left:936px;top:337px;width:1px;height:19px;background:#C8C5C0;"></div>
<div class="ab" style="left:970px;top:337px;width:1px;height:19px;background:#C8C5C0;"></div>
<div class="ab" style="left:1016px;top:337px;width:1px;height:19px;background:#C8C5C0;"></div>
<div class="t" style="right:699px;top:338px;color:#000;letter-spacing:-0.12px;">Web</div>
<div class="t" style="right:600px;top:338px;color:#000;letter-spacing:-0.12px;">50000</div>
<div class="t" style="right:539px;top:338px;color:#000;letter-spacing:-0.45px;">Limited</div>
<div class="t" style="right:482px;top:338px;color:#000;letter-spacing:-0.3px;">Not Used</div>
<div class="t" style="right:413px;top:338px;color:#000;letter-spacing:-0.12px;">0</div>
<div class="t" style="right:367px;top:338px;color:#000;letter-spacing:-0.12px;">0</div>
<div class="t" style="right:311px;top:338px;color:#000;letter-spacing:-0.12px;">0</div>
<div class="t" style="right:258px;top:338px;color:#000;letter-spacing:-0.12px;">0</div>
<div class="t" style="right:212px;top:338px;color:#000;letter-spacing:-0.12px;">0</div>
<div class="t" style="right:156px;top:338px;color:#000;letter-spacing:-0.12px;">0</div>
<div class="t" style="right:122px;top:338px;color:#000;letter-spacing:-0.12px;">0</div>
<div class="t" style="right:76px;top:338px;color:#000;letter-spacing:-0.12px;">0</div>
<div class="t" style="right:20px;top:338px;color:#000;letter-spacing:-0.12px;">0</div>
<div class="ab" style="left:120px;top:340px;width:11px;height:11px;border-top:1px solid #808080;border-left:1px solid #808080;border-right:1px solid #fff;border-bottom:1px solid #fff"></div>
<div class="ab" style="left:121px;top:341px;width:9px;height:9px;border-top:1px solid #404040;border-left:1px solid #404040;border-right:1px solid #D4D0C8;border-bottom:1px solid #D4D0C8;background:#E8E6E2"></div>
<svg style="left:122px;top:342px" width="7" height="7" viewBox="0 0 7 7"><path d="M2 3.2L3.6 4.8L6.2 1.6" stroke="#000" stroke-width="1.4" fill="none"/></svg>
<div class="ab" style="left:117px;top:357px;width:956px;height:19px;background:#E1DEDA;"></div>
<div class="ab" style="left:117px;top:376px;width:956px;height:1px;background:#C8C5C0;"></div>
<div class="ab" style="left:165px;top:357px;width:1px;height:19px;background:#C8C5C0;"></div>
<div class="ab" style="left:393px;top:357px;width:1px;height:19px;background:#C8C5C0;"></div>
<div class="ab" style="left:492px;top:357px;width:1px;height:19px;background:#C8C5C0;"></div>
<div class="ab" style="left:553px;top:357px;width:1px;height:19px;background:#C8C5C0;"></div>
<div class="ab" style="left:610px;top:357px;width:1px;height:19px;background:#C8C5C0;"></div>
<div class="ab" style="left:679px;top:357px;width:1px;height:19px;background:#C8C5C0;"></div>
<div class="ab" style="left:725px;top:357px;width:1px;height:19px;background:#C8C5C0;"></div>
<div class="ab" style="left:781px;top:357px;width:1px;height:19px;background:#C8C5C0;"></div>
<div class="ab" style="left:834px;top:357px;width:1px;height:19px;background:#C8C5C0;"></div>
<div class="ab" style="left:880px;top:357px;width:1px;height:19px;background:#C8C5C0;"></div>
<div class="ab" style="left:936px;top:357px;width:1px;height:19px;background:#C8C5C0;"></div>
<div class="ab" style="left:970px;top:357px;width:1px;height:19px;background:#C8C5C0;"></div>
<div class="ab" style="left:1016px;top:357px;width:1px;height:19px;background:#C8C5C0;"></div>
<div class="t" style="right:699px;top:358px;color:#000;letter-spacing:-0.16px;">Other Allowed TCP ports</div>
<div class="t" style="right:600px;top:358px;color:#000;letter-spacing:-0.12px;">20000</div>
<div class="t" style="right:539px;top:358px;color:#000;letter-spacing:-0.45px;">Limited</div>
<div class="t" style="right:482px;top:358px;color:#000;letter-spacing:-0.3px;">Not Used</div>
<div class="t" style="right:413px;top:358px;color:#000;letter-spacing:-0.12px;">0</div>
<div class="t" style="right:367px;top:358px;color:#000;letter-spacing:-0.12px;">0</div>
<div class="t" style="right:311px;top:358px;color:#000;letter-spacing:-0.12px;">0</div>
<div class="t" style="right:258px;top:358px;color:#000;letter-spacing:-0.12px;">0</div>
<div class="t" style="right:212px;top:358px;color:#000;letter-spacing:-0.12px;">0</div>
<div class="t" style="right:156px;top:358px;color:#000;letter-spacing:-0.12px;">0</div>
<div class="t" style="right:122px;top:358px;color:#000;letter-spacing:-0.12px;">0</div>
<div class="t" style="right:76px;top:358px;color:#000;letter-spacing:-0.12px;">0</div>
<div class="t" style="right:20px;top:358px;color:#000;letter-spacing:-0.12px;">0</div>
<div class="ab" style="left:120px;top:360px;width:11px;height:11px;border-top:1px solid #808080;border-left:1px solid #808080;border-right:1px solid #fff;border-bottom:1px solid #fff"></div>
<div class="ab" style="left:121px;top:361px;width:9px;height:9px;border-top:1px solid #404040;border-left:1px solid #404040;border-right:1px solid #D4D0C8;border-bottom:1px solid #D4D0C8;background:#E8E6E2"></div>
<svg style="left:122px;top:362px" width="7" height="7" viewBox="0 0 7 7"><path d="M2 3.2L3.6 4.8L6.2 1.6" stroke="#000" stroke-width="1.4" fill="none"/></svg>
<div class="ab" style="left:117px;top:377px;width:956px;height:19px;background:#E1DEDA;"></div>
<div class="ab" style="left:117px;top:396px;width:956px;height:1px;background:#C8C5C0;"></div>
<div class="ab" style="left:165px;top:377px;width:1px;height:19px;background:#C8C5C0;"></div>
<div class="ab" style="left:393px;top:377px;width:1px;height:19px;background:#C8C5C0;"></div>
<div class="ab" style="left:492px;top:377px;width:1px;height:19px;background:#C8C5C0;"></div>
<div class="ab" style="left:553px;top:377px;width:1px;height:19px;background:#C8C5C0;"></div>
<div class="ab" style="left:610px;top:377px;width:1px;height:19px;background:#C8C5C0;"></div>
<div class="ab" style="left:679px;top:377px;width:1px;height:19px;background:#C8C5C0;"></div>
<div class="ab" style="left:725px;top:377px;width:1px;height:19px;background:#C8C5C0;"></div>
<div class="ab" style="left:781px;top:377px;width:1px;height:19px;background:#C8C5C0;"></div>
<div class="ab" style="left:834px;top:377px;width:1px;height:19px;background:#C8C5C0;"></div>
<div class="ab" style="left:880px;top:377px;width:1px;height:19px;background:#C8C5C0;"></div>
<div class="ab" style="left:936px;top:377px;width:1px;height:19px;background:#C8C5C0;"></div>
<div class="ab" style="left:970px;top:377px;width:1px;height:19px;background:#C8C5C0;"></div>
<div class="ab" style="left:1016px;top:377px;width:1px;height:19px;background:#C8C5C0;"></div>
<div class="t" style="right:699px;top:378px;color:#000;letter-spacing:-0.12px;">DNS</div>
<div class="t" style="right:600px;top:378px;color:#000;letter-spacing:-0.12px;">1000</div>
<div class="t" style="right:539px;top:378px;color:#000;letter-spacing:-0.45px;">Limited</div>
<div class="t" style="right:482px;top:378px;color:#000;letter-spacing:-0.3px;">Not Used</div>
<div class="t" style="right:413px;top:378px;color:#000;letter-spacing:-0.12px;">0</div>
<div class="t" style="right:367px;top:378px;color:#000;letter-spacing:-0.12px;">0</div>
<div class="t" style="right:311px;top:378px;color:#000;letter-spacing:-0.12px;">0</div>
<div class="t" style="right:258px;top:378px;color:#000;letter-spacing:-0.12px;">0</div>
<div class="t" style="right:212px;top:378px;color:#000;letter-spacing:-0.12px;">0</div>
<div class="t" style="right:156px;top:378px;color:#000;letter-spacing:-0.12px;">0</div>
<div class="t" style="right:122px;top:378px;color:#000;letter-spacing:-0.12px;">0</div>
<div class="t" style="right:76px;top:378px;color:#000;letter-spacing:-0.12px;">0</div>
<div class="t" style="right:20px;top:378px;color:#000;letter-spacing:-0.12px;">0</div>
<div class="ab" style="left:120px;top:380px;width:11px;height:11px;border-top:1px solid #808080;border-left:1px solid #808080;border-right:1px solid #fff;border-bottom:1px solid #fff"></div>
<div class="ab" style="left:121px;top:381px;width:9px;height:9px;border-top:1px solid #404040;border-left:1px solid #404040;border-right:1px solid #D4D0C8;border-bottom:1px solid #D4D0C8;background:#E8E6E2"></div>
<svg style="left:122px;top:382px" width="7" height="7" viewBox="0 0 7 7"><path d="M2 3.2L3.6 4.8L6.2 1.6" stroke="#000" stroke-width="1.4" fill="none"/></svg>
<div class="ab" style="left:117px;top:397px;width:956px;height:19px;background:#E1DEDA;"></div>
<div class="ab" style="left:117px;top:416px;width:956px;height:1px;background:#C8C5C0;"></div>
<div class="ab" style="left:165px;top:397px;width:1px;height:19px;background:#C8C5C0;"></div>
<div class="ab" style="left:393px;top:397px;width:1px;height:19px;background:#C8C5C0;"></div>
<div class="ab" style="left:492px;top:397px;width:1px;height:19px;background:#C8C5C0;"></div>
<div class="ab" style="left:553px;top:397px;width:1px;height:19px;background:#C8C5C0;"></div>
<div class="ab" style="left:610px;top:397px;width:1px;height:19px;background:#C8C5C0;"></div>
<div class="ab" style="left:679px;top:397px;width:1px;height:19px;background:#C8C5C0;"></div>
<div class="ab" style="left:725px;top:397px;width:1px;height:19px;background:#C8C5C0;"></div>
<div class="ab" style="left:781px;top:397px;width:1px;height:19px;background:#C8C5C0;"></div>
<div class="ab" style="left:834px;top:397px;width:1px;height:19px;background:#C8C5C0;"></div>
<div class="ab" style="left:880px;top:397px;width:1px;height:19px;background:#C8C5C0;"></div>
<div class="ab" style="left:936px;top:397px;width:1px;height:19px;background:#C8C5C0;"></div>
<div class="ab" style="left:970px;top:397px;width:1px;height:19px;background:#C8C5C0;"></div>
<div class="ab" style="left:1016px;top:397px;width:1px;height:19px;background:#C8C5C0;"></div>
<div class="t" style="right:699px;top:398px;color:#000;letter-spacing:-0.38px;">Allowed ICMP</div>
<div class="t" style="right:600px;top:398px;color:#000;letter-spacing:-0.12px;">1000</div>
<div class="t" style="right:539px;top:398px;color:#000;letter-spacing:-0.45px;">Limited</div>
<div class="t" style="right:482px;top:398px;color:#000;letter-spacing:-0.3px;">Not Used</div>
<div class="t" style="right:413px;top:398px;color:#000;letter-spacing:-0.12px;">0</div>
<div class="t" style="right:367px;top:398px;color:#000;letter-spacing:-0.12px;">0</div>
<div class="t" style="right:311px;top:398px;color:#000;letter-spacing:-0.12px;">0</div>
<div class="t" style="right:258px;top:398px;color:#000;letter-spacing:-0.12px;">0</div>
<div class="t" style="right:212px;top:398px;color:#000;letter-spacing:-0.12px;">0</div>
<div class="t" style="right:156px;top:398px;color:#000;letter-spacing:-0.12px;">0</div>
<div class="t" style="right:122px;top:398px;color:#000;letter-spacing:-0.12px;">0</div>
<div class="t" style="right:76px;top:398px;color:#000;letter-spacing:-0.12px;">0</div>
<div class="t" style="right:20px;top:398px;color:#000;letter-spacing:-0.12px;">0</div>
<div class="ab" style="left:120px;top:400px;width:11px;height:11px;border-top:1px solid #808080;border-left:1px solid #808080;border-right:1px solid #fff;border-bottom:1px solid #fff"></div>
<div class="ab" style="left:121px;top:401px;width:9px;height:9px;border-top:1px solid #404040;border-left:1px solid #404040;border-right:1px solid #D4D0C8;border-bottom:1px solid #D4D0C8;background:#E8E6E2"></div>
<svg style="left:122px;top:402px" width="7" height="7" viewBox="0 0 7 7"><path d="M2 3.2L3.6 4.8L6.2 1.6" stroke="#000" stroke-width="1.4" fill="none"/></svg>
<div class="ab" style="left:117px;top:417px;width:956px;height:19px;background:#E1DEDA;"></div>
<div class="ab" style="left:117px;top:436px;width:956px;height:1px;background:#E6E6E2;"></div>
<div class="ab" style="left:165px;top:417px;width:1px;height:19px;background:#C8C5C0;"></div>
<div class="ab" style="left:393px;top:417px;width:1px;height:19px;background:#C8C5C0;"></div>
<div class="ab" style="left:492px;top:417px;width:1px;height:19px;background:#C8C5C0;"></div>
<div class="ab" style="left:553px;top:417px;width:1px;height:19px;background:#C8C5C0;"></div>
<div class="ab" style="left:610px;top:417px;width:1px;height:19px;background:#C8C5C0;"></div>
<div class="ab" style="left:679px;top:417px;width:1px;height:19px;background:#C8C5C0;"></div>
<div class="ab" style="left:725px;top:417px;width:1px;height:19px;background:#C8C5C0;"></div>
<div class="ab" style="left:781px;top:417px;width:1px;height:19px;background:#C8C5C0;"></div>
<div class="ab" style="left:834px;top:417px;width:1px;height:19px;background:#C8C5C0;"></div>
<div class="ab" style="left:880px;top:417px;width:1px;height:19px;background:#C8C5C0;"></div>
<div class="ab" style="left:936px;top:417px;width:1px;height:19px;background:#C8C5C0;"></div>
<div class="ab" style="left:970px;top:417px;width:1px;height:19px;background:#C8C5C0;"></div>
<div class="ab" style="left:1016px;top:417px;width:1px;height:19px;background:#C8C5C0;"></div>
<div class="t" style="right:699px;top:418px;color:#000;letter-spacing:-0.06px;">Drop all other</div>
<div class="t" style="right:600px;top:418px;color:#000;letter-spacing:-0.95px;word-spacing:1.6px">DROP PACKETS</div>
<div class="t" style="right:413px;top:418px;color:#000;letter-spacing:-0.12px;">0</div>
<div class="t" style="right:367px;top:418px;color:#000;letter-spacing:-0.12px;">0</div>
<div class="t" style="right:311px;top:418px;color:#000;letter-spacing:-0.12px;">0</div>
<div class="t" style="right:258px;top:418px;color:#000;letter-spacing:-0.12px;">0</div>
<div class="t" style="right:212px;top:418px;color:#000;letter-spacing:-0.12px;">0</div>
<div class="t" style="right:156px;top:418px;color:#000;letter-spacing:-0.12px;">0</div>
<div class="t" style="right:122px;top:418px;color:#000;letter-spacing:-0.12px;">0</div>
<div class="t" style="right:76px;top:418px;color:#000;letter-spacing:-0.12px;">0</div>
<div class="t" style="right:20px;top:418px;color:#000;letter-spacing:-0.12px;">0</div>
<div class="ab" style="left:120px;top:420px;width:11px;height:11px;border-top:1px solid #808080;border-left:1px solid #808080;border-right:1px solid #fff;border-bottom:1px solid #fff"></div>
<div class="ab" style="left:121px;top:421px;width:9px;height:9px;border-top:1px solid #404040;border-left:1px solid #404040;border-right:1px solid #D4D0C8;border-bottom:1px solid #D4D0C8;background:#E8E6E2"></div>
<svg style="left:122px;top:422px" width="7" height="7" viewBox="0 0 7 7"><path d="M2 3.2L3.6 4.8L6.2 1.6" stroke="#000" stroke-width="1.4" fill="none"/></svg>
<div class="t u" style="left:8px;top:576px;color:#000080;letter-spacing:-0.2px">Bandwidth Management and Firewall Homepage</div>
<div class="t u" style="left:254px;top:576px;color:#000080;letter-spacing:-0.2px">Bandwidth Management and Firewall Email</div>
<div class="ab" style="left:918px;top:572px;width:155px;height:16px;border-top:1px solid #808080;border-left:1px solid #808080;border-right:1px solid #fff;border-bottom:1px solid #fff"></div>
<div class="ab" style="left:998px;top:494px;width:83px;height:92px;background:rgba(255,255,255,0.42);border-radius:8px"></div>
<svg style="left:1002px;top:498px" width="74" height="64" viewBox="0 0 74 64"><path d="M33.7 3.1 L3.9 31.9 L35.6 60.7M33.7 3.1 L40.4 2.7 L68.2 28.1M40.4 2.7 L33.7 8.9 L66.3 28.1M68.2 28.1 L68.2 33.8 L37.5 61.6 L35.6 60.7M26.0 16.5 L33.7 12.7 L45.2 21.3 L26.0 16.5M19.3 23.3 L23.1 20.4 L68.2 33.4 L54.8 43.4 L19.3 23.3M12.5 30.0 L16.4 27.7 L35.6 36.7 L12.5 30.0M13.5 35.7 L56.7 45.3 L43.2 57.8 L13.5 35.7M24.1 46.3 L48.0 54.9 L39.4 59.7" stroke="#4A4A4A" stroke-width="1.3" fill="none" stroke-linejoin="round"/></svg>
<div class="t" style="left:1009px;top:561px;color:#3A3A3A;font-size:10px;transform:scaleX(0.97);transform-origin:0 0;letter-spacing:0px">INSTALUJ.CZ</div>
</body></html>
